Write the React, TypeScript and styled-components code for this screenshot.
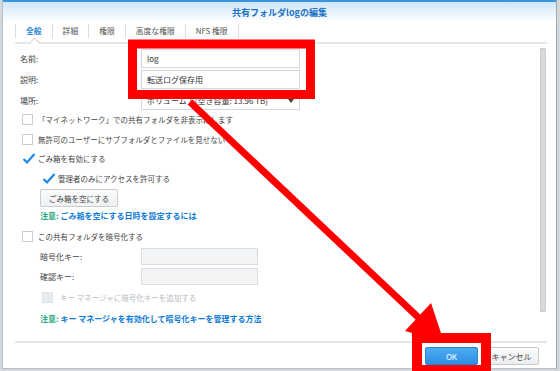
import React from 'react';
import styled, { createGlobalStyle } from 'styled-components';

const GlobalStyle = createGlobalStyle`
  html, body { margin: 0; padding: 0; }
  body {
    font-family: "Noto Sans CJK JP", "Noto Sans", sans-serif;
    color: #444;
  }
  * { box-sizing: border-box; }
`;

// 外枠
const Screen = styled.div`
  position: relative;
  width: 560px;
  height: 371px;
  padding: 0 3px 2px 2px;
  background: #d3d8dd;
  overflow: hidden;
`;

const Dialog = styled.div`
  height: 100%;
  display: flex;
  flex-direction: column;
  background: #fff;
  border-left: 1px solid #b9c0c8;
  border-right: 1px solid #9ea6af;
  border-bottom: 1px solid #b9c0c8;
`;

const Header = styled.div`
  flex: none;
  height: 22px;
  border-top: 2px solid #3b93de;
  background: linear-gradient(#cfe6f9, #ffffff);
  display: flex;
  align-items: center;
  justify-content: center;
  font-size: 9px;
  font-weight: bold;
  color: #1a72c6;
`;

// タブ
const TabStrip = styled.div`
  flex: none;
  display: flex;
  height: 20px;
  margin: 2px 9px 0 12px;
  border-bottom: 2px solid #e6e6e6;
`;

const Tab = styled.div<{ $active?: boolean }>`
  position: relative;
  height: 14px;
  padding: 0 10px;
  border-left: 1px solid #dcdcdc;
  font-size: 7.8px;
  line-height: 14px;
  white-space: nowrap;
  color: ${p => (p.$active ? '#1b7fd8' : '#555')};
  font-weight: ${p => (p.$active ? 'bold' : 'normal')};
  &:last-child { border-right: 1px solid #dcdcdc; }
  ${p =>
    p.$active &&
    `&::after {
      content: '';
      position: absolute;
      left: 50%;
      top: 15px;
      width: 6px;
      height: 6px;
      margin-left: -3px;
      background: #fff;
      border-top: 1px solid #d6d6d6;
      border-left: 1px solid #d6d6d6;
      transform: rotate(45deg);
    }`}
`;

// 本体
const Body = styled.div`
  position: relative;
  flex: 1;
  display: flex;
  flex-direction: column;
  padding: 5px 0 0 17px;
`;

const FieldRow = styled.div<{ $mt?: number; $indent?: number }>`
  display: flex;
  align-items: center;
  margin-top: ${p => p.$mt ?? 0}px;
  padding-left: ${p => p.$indent ?? 0}px;
`;

const Label = styled.div<{ $w: number }>`
  width: ${p => p.$w}px;
  font-size: 8px;
  color: #444;
`;

const TextBox = styled.input<{ $w: number; $h: number }>`
  width: ${p => p.$w}px;
  height: ${p => p.$h}px;
  margin: 0;
  padding: 0 5px;
  border: 1px solid #d3d8de;
  border-radius: 0;
  background: #fff;
  font-family: inherit;
  font-size: 8px;
  color: #333;
  outline: none;
  &:disabled { background: #f3f4f6; border-color: #d9dde2; }
`;

const Select = styled.div`
  width: 159px;
  height: 19px;
  display: flex;
  align-items: center;
  justify-content: space-between;
  padding: 0 5px;
  border: 1px solid #d3d8de;
  font-size: 8px;
  color: #333;
`;

const Caret = styled.span`
  width: 0;
  height: 0;
  border-left: 3px solid transparent;
  border-right: 3px solid transparent;
  border-top: 4px solid #444;
`;

const CheckRow = styled.div<{ $mt?: number; $indent?: number; $h?: number; $disabled?: boolean }>`
  display: flex;
  align-items: center;
  gap: 5px;
  height: ${p => p.$h ?? 19.5}px;
  margin-top: ${p => p.$mt ?? 0}px;
  padding-left: ${p => p.$indent ?? 2}px;
  font-size: 7.5px;
  color: ${p => (p.$disabled ? '#b7bbc0' : '#444')};
  white-space: nowrap;
`;

const Box = styled.span<{ $disabled?: boolean; $checked?: boolean }>`
  position: relative;
  flex: none;
  width: 11px;
  height: 11px;
  border: 1px solid
    ${p => (p.$checked ? 'transparent' : p.$disabled ? '#dfe3e7' : '#c8ced4')};
  background: ${p => (p.$disabled ? '#e9ecef' : '#fff')};
  margin-right: ${p => (p.$disabled ? 2 : 0)}px;
  svg { position: absolute; left: -1px; top: -2px; }
`;

const PlainButton = styled.div`
  width: 78px;
  height: 18px;
  margin: 1px 0 0 20px;
  display: flex;
  align-items: center;
  justify-content: center;
  border: 1px solid #c9ccd1;
  border-radius: 2px;
  background: linear-gradient(#fafbfb, #eef0f2);
  font-size: 7.5px;
  color: #444;
`;

const Note = styled.div<{ $mt: number }>`
  height: 14px;
  line-height: 14px;
  margin: ${p => p.$mt}px 0 0 20px;
  font-size: 8px;
  font-weight: bold;
  color: #0e7bd6;
  white-space: nowrap;
  span { color: #25a67e; }
`;

const Scrollbar = styled.div`
  position: absolute;
  top: 4px;
  right: 10px;
  width: 6px;
  height: 264px;
  background: #dadada;
  border: 1px solid #cdcdcd;
`;

// フッター
const Footer = styled.div`
  flex: none;
  height: 27px;
  margin: 0 9px 0 12px;
  padding: 4px 8px 0 0;
  border-top: 2px solid #e6e6e6;
  display: flex;
  justify-content: flex-end;
  align-items: flex-start;
  gap: 6px;
`;

const FooterButton = styled.div<{ $primary?: boolean }>`
  width: ${p => (p.$primary ? 53 : 55)}px;
  height: 18px;
  display: flex;
  align-items: center;
  justify-content: center;
  border-radius: 2px;
  font-size: 8px;
  border: 1px solid ${p => (p.$primary ? '#2a86d6' : '#c6c9cd')};
  background: ${p =>
    p.$primary ? 'linear-gradient(#4eacf1, #2d8fe4)' : 'linear-gradient(#fafbfb, #eceef0)'};
  color: ${p => (p.$primary ? '#fff' : '#444')};
`;

const Annotation = styled.svg`
  position: absolute;
  left: 0;
  top: 0;
  pointer-events: none;
`;

const CheckMark = () => (
  <svg width="14" height="13" viewBox="0 0 14 13">
    <path d="M1.5 7 L5 10.5 L12.5 2" fill="none" stroke="#1e88e5" strokeWidth="2.2" />
  </svg>
);

function Checkbox({ checked, disabled }: { checked?: boolean; disabled?: boolean }) {
  return (
    <Box $disabled={disabled} $checked={checked}>
      {checked && <CheckMark />}
    </Box>
  );
}

const tabs = ['全般', '詳細', '権限', '高度な権限', 'NFS 権限'];

function App() {
  return (
    <Screen>
      <GlobalStyle />
      <Dialog>
        <Header>共有フォルダlogの編集</Header>
        <TabStrip>
          {tabs.map((t, i) => (
            <Tab key={t} $active={i === 0}>{t}</Tab>
          ))}
        </TabStrip>
        <Body>
          <FieldRow>
            <Label $w={121}>名前:</Label>
            <TextBox $w={159} $h={19} readOnly value="log" />
          </FieldRow>
          <FieldRow $mt={2}>
            <Label $w={121}>説明:</Label>
            <TextBox $w={159} $h={19} readOnly value="転送ログ保存用" />
          </FieldRow>
          <FieldRow $mt={2}>
            <Label $w={121}>場所:</Label>
            <Select>
              <span>ボリューム 1 (空き容量: 13.96 TB)</span>
              <Caret />
            </Select>
          </FieldRow>

          <CheckRow>
            <Checkbox />
            「マイネットワーク」での共有フォルダを非表示にします
          </CheckRow>
          <CheckRow>
            <Checkbox />
            無許可のユーザーにサブフォルダとファイルを見せない
          </CheckRow>
          <CheckRow>
            <Checkbox checked />
            ごみ箱を有効にする
          </CheckRow>
          <CheckRow $indent={22}>
            <Checkbox checked />
            管理者のみにアクセスを許可する
          </CheckRow>
          <PlainButton>ごみ箱を空にする</PlainButton>
          <Note $mt={2}>
            <span>注意: </span>ごみ箱を空にする日時を設定するには
          </Note>

          <CheckRow $mt={3} $h={20}>
            <Checkbox />
            この共有フォルダを暗号化する
          </CheckRow>
          <FieldRow $mt={2} $indent={20}>
            <Label $w={101}>暗号化キー:</Label>
            <TextBox $w={117} $h={17} disabled />
          </FieldRow>
          <FieldRow $mt={3} $indent={20}>
            <Label $w={101}>確認キー:</Label>
            <TextBox $w={117} $h={17} disabled />
          </FieldRow>
          <CheckRow $mt={2} $h={20} $indent={22} $disabled>
            <Checkbox disabled />
            キー マネージャに暗号化キーを追加する
          </CheckRow>
          <Note $mt={5}>
            <span>注意: </span>キー マネージャを有効化して暗号化キーを管理する方法
          </Note>
          <Scrollbar />
        </Body>
        <Footer>
          <FooterButton $primary>OK</FooterButton>
          <FooterButton>キャンセル</FooterButton>
        </Footer>
      </Dialog>

      <Annotation width="560" height="371" viewBox="0 0 560 371">
        <rect x="132.5" y="44" width="178" height="50.5" fill="none" stroke="#ff0000" strokeWidth="9" />
        <rect x="417" y="338" width="69" height="32" fill="none" stroke="#ff0000" strokeWidth="10" />
        <line x1="190" y1="102" x2="420" y2="319" stroke="#ff0000" strokeWidth="7" />
        <polygon points="444,342 431,303 405,331" fill="#ff0000" />
      </Annotation>
    </Screen>
  );
}

export default App;
